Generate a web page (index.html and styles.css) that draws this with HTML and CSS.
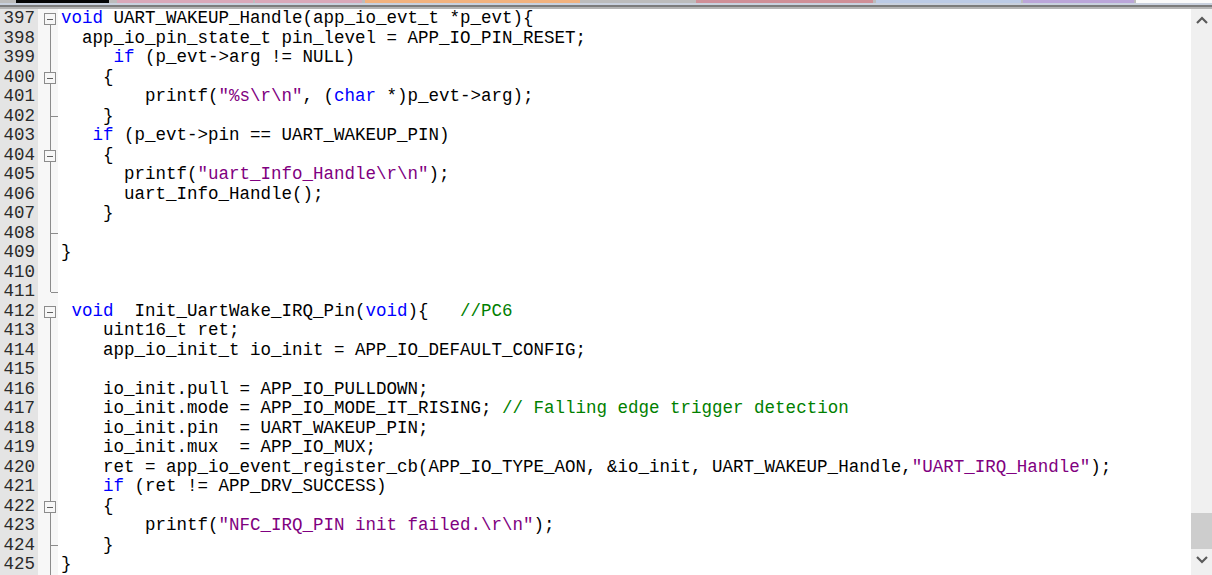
FILE: index.html
```html
<!DOCTYPE html>
<html>
<head>
<meta charset="utf-8">
<link rel="stylesheet" href="styles.css">
</head>
<body>
<div class="tabs">
  <div class="tab t-black"></div>
  <div class="tab t-pink1"></div>
  <div class="tab t-pink2"></div>
  <div class="tab t-orange"></div>
  <div class="tab t-red"></div>
  <div class="tab t-blue"></div>
  <div class="tab t-lav"></div>
  <div class="tab t-white"></div>
</div>
<div class="sep1"></div>
<div class="sep2"></div>
<div class="sep3"></div>
<div class="editor">
  <div class="gutter">
    <div class="ln">397</div><div class="ln">398</div><div class="ln">399</div><div class="ln">400</div>
    <div class="ln">401</div><div class="ln">402</div><div class="ln">403</div><div class="ln">404</div>
    <div class="ln">405</div><div class="ln">406</div><div class="ln">407</div><div class="ln">408</div>
    <div class="ln">409</div><div class="ln">410</div><div class="ln">411</div><div class="ln">412</div>
    <div class="ln">413</div><div class="ln">414</div><div class="ln">415</div><div class="ln">416</div>
    <div class="ln">417</div><div class="ln">418</div><div class="ln">419</div><div class="ln">420</div>
    <div class="ln">421</div><div class="ln">422</div><div class="ln">423</div><div class="ln">424</div>
    <div class="ln">425</div>
  </div>
  <div class="fold">
    <svg width="20" height="566" viewBox="0 0 20 566">
      <g stroke="#8c8c8c" stroke-width="1" fill="none" shape-rendering="crispEdges">
        <line x1="12.5" y1="15" x2="12.5" y2="283"/>
        <line x1="12.5" y1="283" x2="20" y2="283"/>
        <line x1="12.5" y1="107" x2="20" y2="107"/>
        <line x1="12.5" y1="224" x2="20" y2="224"/>
        <line x1="12.5" y1="298" x2="12.5" y2="566"/>
        <line x1="12.5" y1="536" x2="20" y2="536"/>
      </g>
      <g stroke="#8c8c8c" stroke-width="1" fill="#f7f7f7" shape-rendering="crispEdges">
        <rect x="6.5" y="4.5" width="11" height="11"/>
        <rect x="6.5" y="63.5" width="11" height="11"/>
        <rect x="6.5" y="141.5" width="11" height="11"/>
        <rect x="6.5" y="297.5" width="11" height="11"/>
        <rect x="6.5" y="492.5" width="11" height="11"/>
      </g>
      <g stroke="#606060" stroke-width="1" shape-rendering="crispEdges">
        <line x1="9" y1="10.5" x2="15" y2="10.5"/>
        <line x1="9" y1="69.5" x2="15" y2="69.5"/>
        <line x1="9" y1="147.5" x2="15" y2="147.5"/>
        <line x1="9" y1="303.5" x2="15" y2="303.5"/>
        <line x1="9" y1="498.5" x2="15" y2="498.5"/>
      </g>
    </svg>
  </div>
  <div class="code">
<div class="line"><span class="kw">void</span> UART_WAKEUP_Handle(app_io_evt_t *p_evt){</div>
<div class="line">  app_io_pin_state_t pin_level = APP_IO_PIN_RESET;</div>
<div class="line">     <span class="kw">if</span> (p_evt-&gt;arg != NULL)</div>
<div class="line">    {</div>
<div class="line">        printf(<span class="str">"%s\r\n"</span>, (<span class="kw">char</span> *)p_evt-&gt;arg);</div>
<div class="line">    }</div>
<div class="line">   <span class="kw">if</span> (p_evt-&gt;pin == UART_WAKEUP_PIN)</div>
<div class="line">    {</div>
<div class="line">      printf(<span class="str">"uart_Info_Handle\r\n"</span>);</div>
<div class="line">      uart_Info_Handle();</div>
<div class="line">    }</div>
<div class="line"> </div>
<div class="line">}</div>
<div class="line"> </div>
<div class="line"> </div>
<div class="line"> <span class="kw">void</span>  Init_UartWake_IRQ_Pin(<span class="kw">void</span>){   <span class="cm">//PC6</span></div>
<div class="line">    uint16_t ret;</div>
<div class="line">    app_io_init_t io_init = APP_IO_DEFAULT_CONFIG;</div>
<div class="line"> </div>
<div class="line">    io_init.pull = APP_IO_PULLDOWN;</div>
<div class="line">    io_init.mode = APP_IO_MODE_IT_RISING; <span class="cm">// Falling edge trigger detection</span></div>
<div class="line">    io_init.pin  = UART_WAKEUP_PIN;</div>
<div class="line">    io_init.mux  = APP_IO_MUX;</div>
<div class="line">    ret = app_io_event_register_cb(APP_IO_TYPE_AON, &amp;io_init, UART_WAKEUP_Handle,<span class="str">"UART_IRQ_Handle"</span>);</div>
<div class="line">    <span class="kw">if</span> (ret != APP_DRV_SUCCESS)</div>
<div class="line">    {</div>
<div class="line">        printf(<span class="str">"NFC_IRQ_PIN init failed.\r\n"</span>);</div>
<div class="line">    }</div>
<div class="line">}</div>
  </div>
  <div class="scrollbar">
    <div class="arrow">
      <svg width="12" height="8" viewBox="0 0 12 8"><path d="M1 7 L6 2 L11 7" stroke="#5a5a5a" stroke-width="2.2" fill="none"/></svg>
    </div>
    <div class="track">
      <div class="thumb"></div>
    </div>
    <div class="arrow arrow-down">
      <svg width="12" height="8" viewBox="0 0 12 8"><path d="M1 1 L6 6 L11 1" stroke="#5a5a5a" stroke-width="2.2" fill="none"/></svg>
    </div>
  </div>
</div>
</body>
</html>
```

FILE: styles.css
```css
html, body {
  margin: 0;
  padding: 0;
  background: #ffffff;
  overflow: hidden;
  width: 1212px;
  height: 575px;
}

.tabs {
  display: flex;
  height: 3px;
  background: #bcbcbc;
}
.tab { height: 3px; }
.t-black  { margin-left: 16px; width: 93px; background: #050505; }
.t-pink1  { margin-left: 8px; width: 136px; background: #d9a8b9; }
.t-pink2  { margin-left: 2px; width: 107px; background: #d9a8b9; }
.t-orange { margin-left: 3px; width: 215px; background: #f2b27e; }
.t-red    { margin-left: 116px; width: 177px; background: #cf8f97; }
.t-blue   { margin-left: 3px; width: 145px; background: #bccbe6; }
.t-lav    { margin-left: 2px; width: 111px; background: #bba6d9; }
.t-white  { margin-left: 2px; flex: 1; background: #fafafa; }

.sep1 { height: 2px; background: #c9d1de; }
.sep2 { height: 2px; background: #7c7c7c; }
.sep3 { height: 2px; background: #b4b4b4; }

.editor {
  display: flex;
  height: 566px;
  font-family: "Liberation Mono", "DejaVu Sans Mono", monospace;
  font-size: 17.5px;
  line-height: 19.5px;
}

.gutter {
  width: 38px;
  background: #e4e4e4;
  color: #2a2a2a;
  text-align: right;
  box-sizing: border-box;
  padding-right: 3px;
}
.ln { height: 19.5px; }

.fold {
  width: 20px;
  background: #f7f7f7;
}
.fold svg { display: block; }

.code {
  flex: 1;
  padding-left: 3px;
  color: #000000;
  background: #ffffff;
}
.line {
  height: 19.5px;
  white-space: pre;
}
.kw  { color: #0000ff; }
.str { color: #800080; }
.cm  { color: #008000; }

.scrollbar {
  width: 21px;
  background: #f0f0f0;
  display: flex;
  flex-direction: column;
}
.arrow {
  height: 21px;
  display: flex;
  align-items: center;
  justify-content: center;
}
.arrow svg { display: block; }
.arrow-down { height: 19px; align-items: flex-start; }
.track {
  flex: 1;
  display: flex;
  flex-direction: column;
  justify-content: flex-end;
  padding-bottom: 7px;
}
.thumb {
  height: 36px;
  background: #cdcdcd;
}
```
